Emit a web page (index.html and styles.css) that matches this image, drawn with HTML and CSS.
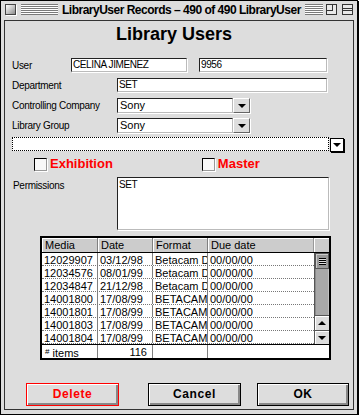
FILE: index.html
```html
<!DOCTYPE html>
<html lang="en">

<head>
    <meta charset="UTF-8">
    <meta name="viewport" content="width=device-width, initial-scale=1.0">
    <title>LibraryUser Records</title>
    <link rel="stylesheet" href="styles.css">
</head>

<body>
    <div class="window">
        <!-- Title Bar -->
        <div class="titlebar">
            <span class="close-box"></span>
            <span class="stripes stripes-left"></span>
            <span class="title">LibraryUser Records – 490 of 490 LibraryUser</span>
            <span class="stripes stripes-right"></span>
            <span class="win-box zoom-box">
                <svg width="11" height="11" viewBox="0 0 11 11">
                    <rect x="0.5" y="0.5" width="10" height="10" fill="#e8e8e8" stroke="#333" />
                    <rect x="0.5" y="0.5" width="6" height="6" fill="none" stroke="#333" />
                </svg>
            </span>
            <span class="win-box collapse-box">
                <svg width="11" height="11" viewBox="0 0 11 11">
                    <rect x="0.5" y="0.5" width="10" height="10" fill="#e8e8e8" stroke="#333" />
                    <line x1="1" y1="4.5" x2="10" y2="4.5" stroke="#333" />
                    <line x1="1" y1="6.5" x2="10" y2="6.5" stroke="#333" />
                </svg>
            </span>
        </div>

        <!-- Form Panel -->
        <div class="panel">
            <h1 class="heading">Library Users</h1>

            <div class="row row-user">
                <label class="label label-user">User</label>
                <div class="field field-name">CELINA JIMENEZ</div>
                <div class="field field-id">9956</div>
            </div>

            <div class="row row-dept">
                <label class="label">Department</label>
                <div class="field field-wide">SET</div>
            </div>

            <div class="row row-select">
                <label class="label">Controlling Company</label>
                <div class="select">
                    <div class="select-value">Sony</div>
                    <div class="select-btn"><span class="tri"></span></div>
                </div>
            </div>

            <div class="row row-select row-lib">
                <label class="label">Library Group</label>
                <div class="select">
                    <div class="select-value">Sony</div>
                    <div class="select-btn"><span class="tri"></span></div>
                </div>
            </div>

            <div class="row row-combo">
                <div class="combo-field"></div>
                <div class="combo-btn"><span class="tri"></span></div>
            </div>

            <div class="row row-checks">
                <div class="check check-exhibition">
                    <span class="check-box"></span>
                    <span class="check-label">Exhibition</span>
                </div>
                <div class="check check-master">
                    <span class="check-box"></span>
                    <span class="check-label">Master</span>
                </div>
            </div>

            <div class="row row-perm">
                <label class="label label-perm">Permissions</label>
                <div class="field textarea">SET</div>
            </div>

            <!-- Media List -->
            <div class="list">
                <div class="list-head">
                    <div class="cell">Media</div>
                    <div class="cell">Date</div>
                    <div class="cell">Format</div>
                    <div class="cell">Due date</div>
                    <div class="cell corner"></div>
                </div>
                <div class="list-body">
                    <div class="list-rows">
                        <div class="list-row"><div class="cell">12029907</div><div class="cell">03/12/98</div><div class="cell">Betacam D</div><div class="cell">00/00/00</div></div>
                        <div class="list-row"><div class="cell">12034576</div><div class="cell">08/01/99</div><div class="cell">Betacam D</div><div class="cell">00/00/00</div></div>
                        <div class="list-row"><div class="cell">12034847</div><div class="cell">21/12/98</div><div class="cell">Betacam D</div><div class="cell">00/00/00</div></div>
                        <div class="list-row"><div class="cell">14001800</div><div class="cell">17/08/99</div><div class="cell">BETACAM D</div><div class="cell">00/00/00</div></div>
                        <div class="list-row"><div class="cell">14001801</div><div class="cell">17/08/99</div><div class="cell">BETACAM D</div><div class="cell">00/00/00</div></div>
                        <div class="list-row"><div class="cell">14001803</div><div class="cell">17/08/99</div><div class="cell">BETACAM D</div><div class="cell">00/00/00</div></div>
                        <div class="list-row"><div class="cell">14001804</div><div class="cell">17/08/99</div><div class="cell">BETACAM D</div><div class="cell">00/00/00</div></div>
                    </div>
                    <div class="scrollbar">
                        <div class="scroll-thumb"><span class="grip"></span></div>
                        <div class="scroll-track"></div>
                        <div class="scroll-arrow"><span class="tri tri-up"></span></div>
                        <div class="scroll-arrow"><span class="tri"></span></div>
                    </div>
                </div>
                <div class="list-foot">
                    <div class="cell"><span class="hash">#</span> items</div>
                    <div class="cell cell-count">116</div>
                    <div class="cell"></div>
                    <div class="cell"></div>
                </div>
            </div>

            <!-- Buttons -->
            <div class="actions">
                <button class="btn btn-delete">Delete</button>
                <button class="btn btn-cancel">Cancel</button>
                <button class="btn btn-ok">OK</button>
            </div>
        </div>
    </div>
</body>

</html>
```

FILE: styles.css
```css
/* Base */
body {
    margin: 0;
    background-color: #ffffff;
    font-family: 'Liberation Sans', Arial, sans-serif;
    font-size: 10px;
    color: #000000;
}

/* Window frame */
.window {
    box-sizing: border-box;
    width: 358px;
    height: 415px;
    border: 1px solid #000000;
    box-shadow: 1px 1px 0 #000000;
    background-color: #dddddd;
    padding: 0 3px 4px 3px;
    display: flex;
    flex-direction: column;
}

/* Title bar */
.titlebar {
    height: 19px;
    display: flex;
    align-items: flex-start;
    padding-top: 3px;
    box-sizing: border-box;
}

.close-box {
    width: 11px;
    height: 11px;
    box-sizing: border-box;
    margin-left: 1px;
    border: 1px solid #444444;
    background: linear-gradient(135deg, #ffffff 0%, #c8c8c8 50%, #8a8a8a 100%);
    box-shadow: 1px 1px 0 #ffffff;
}

.stripes {
    height: 11px;
    background: repeating-linear-gradient(to bottom, #7a7a7a 0, #7a7a7a 1px, #ffffff 1px, #ffffff 2px);
}

.stripes-left {
    width: 37px;
    margin-left: 5px;
}

.stripes-right {
    flex: 1;
    margin-left: 4px;
}

.title {
    margin-left: 4px;
    font-size: 12px;
    font-weight: bold;
    letter-spacing: -0.5px;
    line-height: 12px;
    white-space: nowrap;
}

.win-box {
    width: 11px;
    height: 11px;
    display: block;
}

.win-box svg {
    display: block;
}

.zoom-box {
    margin-left: 3px;
}

.collapse-box {
    margin-left: 5px;
    margin-right: 1px;
}

/* Inner panel */
.panel {
    flex: 1;
    border: 1px solid #333333;
    background-color: #dddddd;
    display: flex;
    flex-direction: column;
}

.heading {
    margin: 3px 0 0 0;
    padding-right: 10px;
    font-size: 18px;
    line-height: 20px;
    font-weight: bold;
    text-align: center;
}

/* Form rows */
.row {
    display: flex;
    align-items: center;
    padding-left: 7px;
}

.label {
    font-size: 10px;
    letter-spacing: -0.3px;
    width: 105px;
    flex-shrink: 0;
}

.row-user {
    margin-top: 14px;
    height: 14px;
}

.label-user {
    width: 59px;
}

.row-dept {
    margin-top: 6px;
    height: 14px;
}

.row-select {
    margin-top: 6px;
    height: 15px;
}

.row-lib {
    margin-top: 5px;
}

.field {
    box-sizing: border-box;
    height: 14px;
    background-color: #ffffff;
    border: 1px solid;
    border-color: #222222 #bbbbbb #bbbbbb #222222;
    box-shadow: 1px 1px 0 #ffffff;
    padding-left: 1px;
    font-size: 10px;
    line-height: 12px;
    letter-spacing: -0.4px;
    white-space: nowrap;
}

.field-name {
    width: 116px;
}

.field-id {
    width: 128px;
    margin-left: 12px;
}

.field-wide {
    width: 210px;
}

/* Popup select */
.select {
    display: flex;
    width: 133px;
    height: 15px;
    box-shadow: 1px 1px 0 #ffffff;
}

.select-value {
    flex: 1;
    box-sizing: border-box;
    background-color: #ffffff;
    border: 1px solid;
    border-color: #222222 #bbbbbb #bbbbbb #222222;
    padding-left: 2px;
    font-size: 11px;
    line-height: 13px;
}

.select-btn {
    width: 17px;
    box-sizing: border-box;
    background-color: #dddddd;
    border: 1px solid;
    border-color: #ffffff #666666 #666666 #ffffff;
    display: flex;
    align-items: center;
    justify-content: center;
}

.tri {
    width: 0;
    height: 0;
    border-left: 4px solid transparent;
    border-right: 4px solid transparent;
    border-top: 4px solid #000000;
}

.tri-up {
    border-top: none;
    border-bottom: 4px solid #000000;
}

/* Combo field */
.row-combo {
    margin-top: 4px;
    height: 16px;
    padding-left: 7px;
    align-items: flex-start;
}

.combo-field {
    box-sizing: border-box;
    width: 317px;
    height: 14px;
    background-color: #ffffff;
    border: 1px dotted #000000;
}

.combo-btn {
    box-sizing: border-box;
    width: 14px;
    height: 14px;
    margin-top: 1px;
    margin-left: 1px;
    background-color: #ffffff;
    border: 1px solid #000000;
    box-shadow: 1px 1px 0 #000000;
    display: flex;
    align-items: center;
    justify-content: center;
}

/* Checkboxes */
.row-checks {
    margin-top: 4px;
    height: 14px;
}

.check {
    display: flex;
    align-items: center;
}

.check-exhibition {
    margin-left: 22px;
}

.check-master {
    margin-left: 89px;
}

.check-box {
    box-sizing: border-box;
    width: 13px;
    height: 13px;
    background-color: #f8f8f8;
    border: 1px solid;
    border-color: #000000 #999999 #999999 #000000;
    box-shadow: 1px 1px 0 #ffffff;
}

.check-label {
    margin-left: 3px;
    color: #ff0000;
    font-size: 13px;
    font-weight: bold;
    line-height: 14px;
}

/* Permissions */
.row-perm {
    margin-top: 6px;
    height: 53px;
    align-items: flex-start;
}

.label-perm {
    margin-top: 3px;
    padding-left: 1px;
    width: 104px;
}

.textarea {
    width: 212px;
    height: 53px;
    padding-top: 1px;
}

/* Media list */
.list {
    box-sizing: border-box;
    width: 291px;
    margin: 6px 0 0 35px;
    border: 2px solid #000000;
    background-color: #ffffff;
    font-size: 11px;
}

.list-head,
.list-row,
.list-foot {
    display: grid;
    grid-template-columns: 56px 55px 55px 106px 15px;
}

.list-foot {
    grid-template-columns: 56px 55px 55px 121px;
    border-top: 1px solid #000000;
}

.list-head {
    height: 14px;
    border-bottom: 1px solid #000000;
}

.list-head .cell {
    background-color: #cccccc;
    box-shadow: inset 1px 1px 0 #ffffff;
    line-height: 14px;
    padding-left: 3px;
}

.cell {
    box-sizing: border-box;
    border-right: 1px solid #808080;
    padding-left: 2px;
    overflow: hidden;
    white-space: nowrap;
}

.list-head .cell:nth-child(4),
.list-head .corner,
.list-row .cell:nth-child(4),
.list-foot .cell:nth-child(4) {
    border-right: none;
}

.list-head .cell:nth-child(4) {
    border-right: 1px solid #999999;
}

.list-body {
    display: flex;
}

.list-rows {
    width: 272px;
}

.list-row {
    grid-template-columns: 56px 55px 55px 106px;
    height: 13px;
    box-sizing: border-box;
    border-bottom: 1px dotted #777777;
}

.list-row .cell {
    height: 12px;
    line-height: 14px;
}

.list-foot .cell {
    height: 13px;
    line-height: 14px;
}

.hash {
    font-size: 8px;
    vertical-align: 3px;
    padding-left: 1px;
}

.cell-count {
    text-align: right;
    padding-right: 5px;
}

/* Scrollbar */
.scrollbar {
    width: 15px;
    box-sizing: border-box;
    border-left: 1px solid #555555;
    display: flex;
    flex-direction: column;
}

.scroll-thumb {
    height: 16px;
    box-sizing: border-box;
    background-color: #999999;
    border: 1px solid #555555;
    box-shadow: inset 1px 1px 0 #cccccc;
    display: flex;
    align-items: center;
    justify-content: center;
}

.grip {
    width: 7px;
    height: 7px;
    background: repeating-linear-gradient(to bottom, #000000 0, #000000 1px, #dddddd 1px, #dddddd 2px);
}

.scroll-track {
    height: 46px;
    background-color: #a8a8a8;
    box-shadow: inset 1px 0 0 #8a8a8a, inset -1px 0 0 #c0c0c0;
}

.scroll-arrow {
    height: 15px;
    box-sizing: border-box;
    background-color: #dddddd;
    border-top: 1px solid #555555;
    box-shadow: inset 1px 1px 0 #ffffff;
    display: flex;
    align-items: center;
    justify-content: center;
}

.scroll-arrow:last-child {
    height: 14px;
}

/* Buttons */
.actions {
    display: flex;
    margin-top: 23px;
    padding-left: 21px;
}

.btn {
    box-sizing: border-box;
    width: 93px;
    height: 23px;
    border: 1px solid #000000;
    background-color: #dddddd;
    box-shadow: inset 1px 1px 0 #ffffff, inset -2px -2px 0 #888888;
    font-family: 'Liberation Sans', Arial, sans-serif;
    font-size: 12px;
    font-weight: bold;
    letter-spacing: 0.6px;
    color: #000000;
    padding: 0 0 1px 0;
}

.btn-delete {
    border-color: #ff0000;
    color: #ff0000;
}

.btn-cancel {
    margin-left: 29px;
}

.btn-ok {
    width: 92px;
    margin-left: 16px;
}
```
